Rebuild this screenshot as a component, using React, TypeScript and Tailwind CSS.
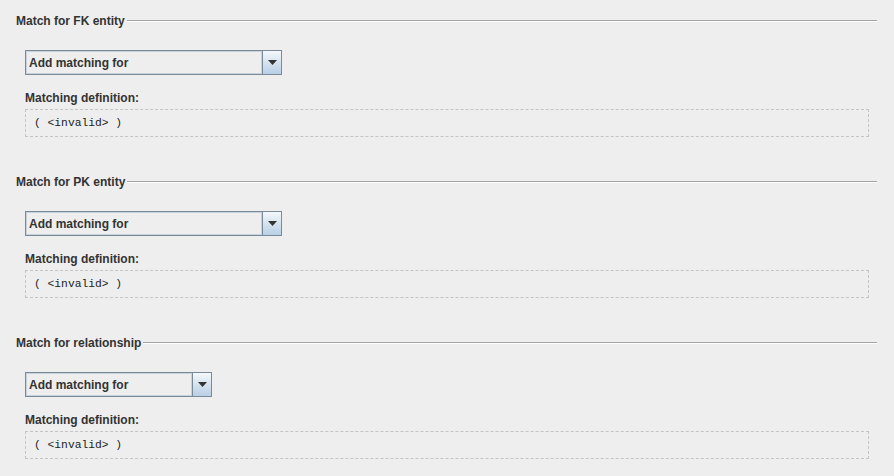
const sections = [
  { title: "Match for FK entity", comboWidth: "w-[257px]" },
  { title: "Match for PK entity", comboWidth: "w-[257px]" },
  { title: "Match for relationship", comboWidth: "w-[187px]" },
];

const ComboBox = ({ width }: { width: string }) => (
  <div className={`flex h-[25px] ${width} border border-[#7a8a99] bg-[#eeeeee]`}>
    <div className="flex flex-1 items-center border border-[#c8d2dc] pl-[2px] text-[12px] font-bold text-[#333333]">
      Add matching for
    </div>
    <div className="flex w-[19px] items-center justify-center border-l border-[#7a8a99] bg-gradient-to-b from-[#f4f8fb] to-[#b8cfe5]">
      <svg width="9" height="5" viewBox="0 0 9 5">
        <polygon points="0,0 9,0 4.5,5" fill="#333333" />
      </svg>
    </div>
  </div>
);

const App = () => {
  return (
    <div
      className="h-[476px] w-[894px] bg-[#eeeeee] pt-[14px] text-[#333333]"
      style={{ fontFamily: '"Liberation Sans", Arial, sans-serif' }}
    >
      {sections.map((s, i) => (
        <div key={s.title} className={i > 0 ? "mt-[38px]" : ""}>
          <div className="flex h-[14px] items-center pl-[16px] pr-[17px]">
            <span className="text-[12px] font-bold leading-[14px]">{s.title}</span>
            <div className="ml-[2px] flex-1 border-t border-b border-t-[#a3a3a3] border-b-[#ffffff]" />
          </div>
          <div className="pl-[25px] pr-[25px]">
            <div className="mt-[22px]">
              <ComboBox width={s.comboWidth} />
            </div>
            <div className="mt-[16px] text-[12px] font-bold leading-[14px]">
              Matching definition:
            </div>
            <div className="mt-[4px] flex h-[28px] items-center border border-dashed border-[#c4c4c4] pl-[8px] pt-[1px]">
              <span
                className="text-[11.3px] text-[#222222]"
                style={{ fontFamily: '"Liberation Mono", "Courier New", monospace' }}
              >
                {"( <invalid> )"}
              </span>
            </div>
          </div>
        </div>
      ))}
    </div>
  );
};

export default App;
